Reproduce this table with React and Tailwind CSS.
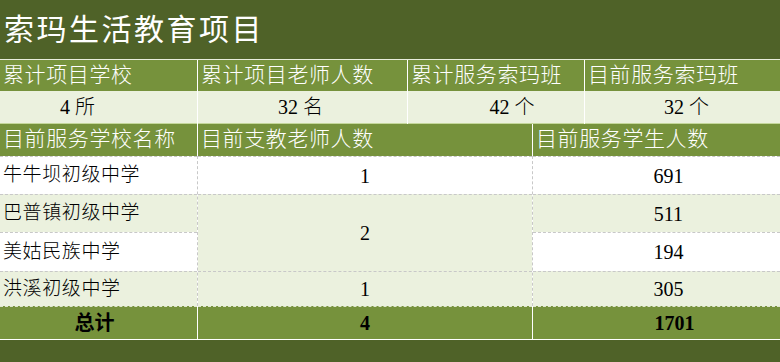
const font = { fontFamily: '"Liberation Serif", "Noto Sans CJK SC", serif' }

const schools = [
  { name: '牛牛坝初级中学', students: 691, bg: 'bg-white', h: 'h-[38px]' },
  { name: '巴普镇初级中学', students: 511, bg: 'bg-[#ebf1de]', h: 'h-[38px]' },
  { name: '美姑民族中学', students: 194, bg: 'bg-white', h: 'h-[39px]' },
  { name: '洪溪初级中学', students: 305, bg: 'bg-[#ebf1de]', h: 'h-[35px]' },
]

const totals = [
  { v: '4 所', pad: 'pr-[42px]' },
  { v: '32 名', pad: 'pr-[4px]' },
  { v: '42 个', pad: 'pl-[32px]' },
  { v: '32 个', pad: 'pl-[8px]' },
]

function Head({ children, className = '' }) {
  return (
    <div className={'flex items-center pl-[3px] text-[21px] font-light tracking-[0.6px] text-white bg-[#76923c] ' + className}>
      {children}
    </div>
  )
}

export default function App() {
  return (
    <div className="w-[780px] h-[362px] bg-white overflow-hidden" style={font}>
      <div className="h-[60px] bg-[#4f6228] flex items-center pl-[4px] text-[30px] tracking-[2.5px] text-white border-b border-[#e8eddc]">
        索玛生活教育项目
      </div>

      <div className="grid grid-cols-[197px_209px_176px_1fr] gap-x-px bg-white">
        <Head className="h-[31px]">累计项目学校</Head>
        <Head className="h-[31px]">累计项目老师人数</Head>
        <Head className="h-[31px]">累计服务索玛班</Head>
        <Head className="h-[31px]">目前服务索玛班</Head>
        {totals.map((t) => (
          <div key={t.v} className={'h-[33px] flex items-center justify-center bg-[#ebf1de] text-[20px] font-light text-black border-b border-[#c4d79b] ' + t.pad}>
            {t.v}
          </div>
        ))}
      </div>

      <div className="grid grid-cols-[197px_334px_1fr] gap-x-px bg-white">
        <Head className="h-[32px]">目前服务学校名称</Head>
        <Head className="h-[32px]">目前支教老师人数</Head>
        <Head className="h-[32px]">目前服务学生人数</Head>
      </div>

      <div className="flex">
        <div className="w-[198px] flex flex-col border-r border-dashed border-[#c8c8c8]">
          {schools.map((s) => (
            <div key={s.name} className={'flex items-center pl-[3px] text-[19px] font-light tracking-[0.6px] text-black border-t border-dashed border-[#c8c8c8] ' + s.bg + ' ' + s.h}>
              {s.name}
            </div>
          ))}
        </div>
        <div className="w-[334px] flex flex-col text-[20px] text-black">
          <div className="h-[38px] flex items-center justify-center bg-white border-t border-dashed border-[#c8c8c8]">1</div>
          <div className="h-[77px] flex items-center justify-center bg-[#ebf1de] border-t border-dashed border-[#c8c8c8]">2</div>
          <div className="h-[35px] flex items-center justify-center bg-[#ebf1de] border-t border-dashed border-[#c8c8c8]">1</div>
        </div>
        <div className="flex-1 flex flex-col text-[20px] text-black border-l border-dashed border-[#c8c8c8]">
          {schools.map((s) => (
            <div key={s.name} className={'flex items-center justify-center pl-[24px] border-t border-dashed border-[#c8c8c8] ' + s.bg + ' ' + s.h}>
              {s.students}
            </div>
          ))}
        </div>
      </div>

      <div className="grid grid-cols-[197px_334px_1fr] gap-x-px bg-white border-b border-white">
        <div className="h-[33px] flex items-center justify-center pr-[8px] bg-[#76923c] text-[20px] font-bold text-black border-t border-dashed border-[#dfe6cf]">总计</div>
        <div className="h-[33px] flex items-center justify-center bg-[#76923c] text-[20px] font-bold text-black border-t border-dashed border-[#dfe6cf]">4</div>
        <div className="h-[33px] flex items-center justify-center pl-[36px] bg-[#76923c] text-[20px] font-bold text-black border-t border-dashed border-[#dfe6cf]">1701</div>
      </div>
      <div className="h-[30px] bg-[#4f6228]" />
    </div>
  )
}
